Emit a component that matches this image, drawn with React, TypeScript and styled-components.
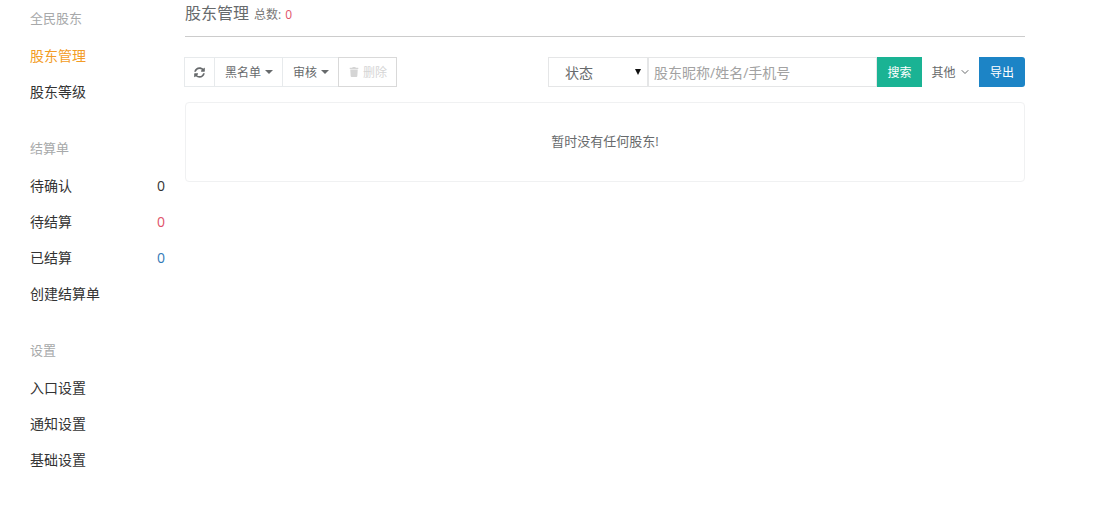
import styled, { createGlobalStyle } from "styled-components";
import { FaSyncAlt, FaTrash } from "react-icons/fa";
import { FiChevronDown } from "react-icons/fi";

const Global = createGlobalStyle`
  html, body {
    margin: 0;
    padding: 0;
    background: #fff;
  }
  body {
    font-family: "Open Sans", "Liberation Sans", "Noto Sans CJK SC", sans-serif;
    font-size: 13px;
    color: #676a6c;
  }
`;

const Page = styled.div`
  display: flex;
  width: 1119px;
  height: 509px;
  overflow: hidden;
`;

const Sidebar = styled.nav`
  width: 185px;
  flex: none;
  padding-right: 20px;
  padding-left: 30px;
  box-sizing: border-box;
`;

const Group = styled.div`
  margin-bottom: 20px;
`;

const GroupTitle = styled.div`
  height: 36px;
  margin-bottom: 2px;
  line-height: 36px;
  color: #a7a9aa;
  font-size: 13px;
`;

const NavItem = styled.a<{ $active?: boolean }>`
  display: flex;
  justify-content: space-between;
  height: 36px;
  line-height: 36px;
  font-size: 14px;
  color: ${(p) => (p.$active ? "#f39c25" : "#333")};
`;

const Count = styled.span<{ $color?: string }>`
  font-size: 14px;
  color: ${(p) => p.$color ?? "#333"};
`;

const Main = styled.main`
  width: 840px;
  flex: none;
`;

const Header = styled.div`
  display: flex;
  align-items: baseline;
  gap: 5px;
  height: 37px;
  box-sizing: border-box;
  padding-top: 2px;
  border-bottom: 1px solid #ccc;
  line-height: 22px;
`;

const Title = styled.h1`
  margin: 0;
  font-size: 16px;
  font-weight: 400;
  color: #676a6c;
`;

const Total = styled.small`
  font-size: 12px;
  color: #777;
`;

const Red = styled.span`
  margin-left: 1px;
  color: #e0526a;
`;

const Toolbar = styled.div`
  display: flex;
  justify-content: space-between;
  margin-top: 20px;
  height: 30px;
`;

const ButtonGroup = styled.div`
  display: flex;
  margin-left: -1px;
`;

const SearchGroup = styled.div`
  display: flex;
`;

const ToolButton = styled.button<{ $disabled?: boolean }>`
  display: flex;
  align-items: center;
  gap: 4px;
  height: 30px;
  box-sizing: border-box;
  padding: 0 9px 0 10px;
  margin-left: -1px;
  background: #fff;
  border: 1px solid #e7eaec;
  font: inherit;
  font-size: 12px;
  color: ${(p) => (p.$disabled ? "#d5d5d5" : "#676a6c")};
  border-color: ${(p) => (p.$disabled ? "#d9d9d9" : "#e7eaec")};
`;

const RefreshButton = styled(ToolButton)`
  justify-content: center;
  width: 31px;
  padding: 0;
  margin-left: 0;
`;

const Caret = styled.i`
  width: 0;
  height: 0;
  border-left: 4px solid transparent;
  border-right: 4px solid transparent;
  border-top: 4px solid #676a6c;
`;

const StatusSelect = styled.div`
  position: relative;
  width: 100px;
  height: 30px;
  box-sizing: border-box;
  padding-left: 16px;
  line-height: 29px;
  border: 1px solid #e5e6e7;
  font-size: 14px;
  color: #676a6c;

  &::after {
    content: "";
    position: absolute;
    right: 6px;
    top: 11px;
    border-left: 3.5px solid transparent;
    border-right: 3.5px solid transparent;
    border-top: 6px solid #111;
  }
`;

const SearchInput = styled.input`
  width: 229px;
  height: 30px;
  box-sizing: border-box;
  padding: 0 5px;
  border: 1px solid #e5e6e7;
  outline: none;
  font: inherit;
  font-size: 14px;

  &::placeholder {
    color: #a2a2a2;
    opacity: 1;
  }
`;

const ActionButton = styled.button<{ $bg: string; $width: number; $round?: boolean }>`
  width: ${(p) => p.$width}px;
  height: 30px;
  padding: 0;
  border: 0;
  background: ${(p) => p.$bg};
  color: #fff;
  font: inherit;
  font-size: 12px;
  border-radius: ${(p) => (p.$round ? "0 3px 3px 0" : "0")};
`;

const OtherButton = styled.button`
  display: flex;
  align-items: center;
  justify-content: center;
  gap: 3px;
  width: 57px;
  height: 30px;
  padding: 0 0 0 1px;
  border: 0;
  background: #fff;
  font: inherit;
  font-size: 12px;
  color: #676a6c;
`;

const EmptyCard = styled.div`
  display: flex;
  align-items: center;
  justify-content: center;
  height: 80px;
  margin-top: 15px;
  padding-bottom: 4px;
  box-sizing: border-box;
  border: 1px solid #f0f1f2;
  border-radius: 4px;
  font-size: 13px;
  color: #676a6c;
`;

export default function App() {
  return (
    <Page>
      <Global />
      <Sidebar>
        <Group>
          <GroupTitle>全民股东</GroupTitle>
          <NavItem $active>股东管理</NavItem>
          <NavItem>股东等级</NavItem>
        </Group>
        <Group>
          <GroupTitle>结算单</GroupTitle>
          <NavItem>
            待确认<Count>0</Count>
          </NavItem>
          <NavItem>
            待结算<Count $color="#e0526a">0</Count>
          </NavItem>
          <NavItem>
            已结算<Count $color="#337ab7">0</Count>
          </NavItem>
          <NavItem>创建结算单</NavItem>
        </Group>
        <Group>
          <GroupTitle>设置</GroupTitle>
          <NavItem>入口设置</NavItem>
          <NavItem>通知设置</NavItem>
          <NavItem>基础设置</NavItem>
        </Group>
      </Sidebar>
      <Main>
        <Header>
          <Title>股东管理</Title>
          <Total>
            总数: <Red>0</Red>
          </Total>
        </Header>
        <Toolbar>
          <ButtonGroup>
            <RefreshButton aria-label="刷新">
              <FaSyncAlt size={11} />
            </RefreshButton>
            <ToolButton>
              黑名单 <Caret />
            </ToolButton>
            <ToolButton>
              审核 <Caret />
            </ToolButton>
            <ToolButton $disabled>
              <FaTrash size={10} /> 删除
            </ToolButton>
          </ButtonGroup>
          <SearchGroup>
            <StatusSelect>状态</StatusSelect>
            <SearchInput placeholder="股东昵称/姓名/手机号" />
            <ActionButton $bg="#1ab394" $width={45}>搜索</ActionButton>
            <OtherButton>
              其他 <FiChevronDown size={12} />
            </OtherButton>
            <ActionButton $bg="#1c84c6" $width={46} $round>
              导出
            </ActionButton>
          </SearchGroup>
        </Toolbar>
        <EmptyCard>暂时没有任何股东!</EmptyCard>
      </Main>
    </Page>
  );
}
